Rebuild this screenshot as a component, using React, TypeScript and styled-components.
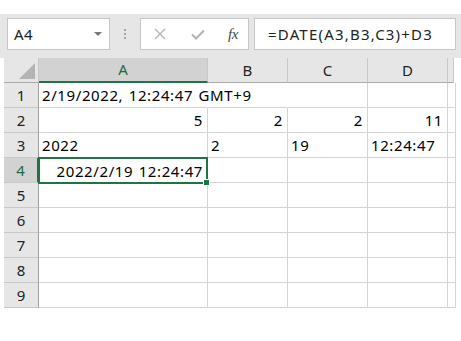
import React from "react";
import styled, { createGlobalStyle } from "styled-components";

const Global = createGlobalStyle`
  html, body { margin: 0; padding: 0; background: #fff; }
  body { font-family: "Segoe UI", "Noto Sans", "Open Sans", sans-serif; }
`;

const Page = styled.div`
  width: 461px;
  height: 341px;
  padding-top: 14px;
  box-sizing: border-box;
  background: #fff;
  overflow: hidden;
`;

const Toolbar = styled.div`
  height: 44px;
  background: #e6e6e6;
  display: flex;
  align-items: flex-start;
  padding: 4px 0 0 7px;
  box-sizing: border-box;
`;

const NameBox = styled.div`
  width: 103px;
  height: 32px;
  background: #fff;
  border: 1px solid #c6c6c6;
  box-sizing: border-box;
  display: flex;
  align-items: center;
  justify-content: space-between;
  padding: 0 7px 0 6px;
  font-size: 15px;
  letter-spacing: 0.5px;
  color: #222;
`;

const Caret = styled.span`
  width: 0;
  height: 0;
  border-left: 4px solid transparent;
  border-right: 4px solid transparent;
  border-top: 4px solid #777;
`;

const Dots = styled.div`
  width: 30px;
  height: 32px;
  display: flex;
  flex-direction: column;
  align-items: center;
  justify-content: center;
  gap: 2px;
  span {
    width: 2px;
    height: 2px;
    background: #a6a6a6;
  }
`;

const FxBox = styled.div`
  width: 109px;
  height: 32px;
  background: #fff;
  border: 1px solid #c6c6c6;
  box-sizing: border-box;
  display: flex;
  align-items: center;
  padding-left: 13px;
`;

const FxButton = styled.div<{ $w: number }>`
  width: ${(p) => p.$w}px;
  display: flex;
  align-items: center;
  justify-content: flex-start;
  height: 100%;
`;

const FxLabel = styled.span`
  font-family: "Liberation Serif", "DejaVu Serif", serif;
  font-style: italic;
  font-size: 15px;
  color: #444;
  letter-spacing: -0.5px;
`;

const FormulaBox = styled.div`
  margin-left: 5px;
  width: 202px;
  height: 32px;
  background: #fff;
  border: 1px solid #c6c6c6;
  box-sizing: border-box;
  display: flex;
  align-items: center;
  padding-left: 13px;
  font-size: 15px;
  letter-spacing: 1.2px;
  color: #222;
  white-space: nowrap;
`;

const Grid = styled.div`
  margin-left: 4px;
  width: 450px;
  display: grid;
  grid-template-columns: 35px 169px 80px 80px 80px 6px;
  font-size: 15px;
`;

const Corner = styled.div`
  height: 25px;
  background: #e6e6e6;
  border-right: 1px solid #c8c8c8;
  border-bottom: 1px solid #ababab;
  box-sizing: border-box;
  position: relative;
  &::after {
    content: "";
    position: absolute;
    right: 3px;
    bottom: 3px;
    width: 0;
    height: 0;
    border-left: 16px solid transparent;
    border-bottom: 16px solid #b4b4b4;
  }
`;

const ColHead = styled.div<{ $sel?: boolean }>`
  height: 25px;
  background: ${(p) => (p.$sel ? "#d2d2d2" : "#e6e6e6")};
  border-right: 1px solid #c8c8c8;
  border-bottom: ${(p) => (p.$sel ? "2px solid #217346" : "1px solid #ababab")};
  box-sizing: border-box;
  display: flex;
  align-items: center;
  justify-content: center;
  color: ${(p) => (p.$sel ? "#1e6b41" : "#222")};
  padding-bottom: 1px;
`;

const RowHead = styled.div<{ $sel?: boolean }>`
  height: 25px;
  background: ${(p) => (p.$sel ? "#d2d2d2" : "#e6e6e6")};
  border-right: ${(p) => (p.$sel ? "2px solid #217346" : "1px solid #9e9e9e")};
  border-bottom: 1px solid #c8c8c8;
  box-sizing: border-box;
  display: flex;
  align-items: center;
  justify-content: center;
  color: ${(p) => (p.$sel ? "#1e6b41" : "#222")};
`;

const Cell = styled.div<{ $align?: "left" | "right"; $overflow?: boolean }>`
  height: 25px;
  border-right: ${(p) => (p.$overflow ? "1px solid transparent" : "1px solid #d4d4d4")};
  border-bottom: 1px solid #d4d4d4;
  box-sizing: border-box;
  display: flex;
  align-items: center;
  justify-content: ${(p) => (p.$align === "right" ? "flex-end" : "flex-start")};
  padding: 0 4px 0 3px;
  color: #000;
  white-space: nowrap;
  letter-spacing: 0.6px;
  word-spacing: 1px;
  overflow: visible;
  position: relative;
  z-index: ${(p) => (p.$overflow ? 1 : 0)};
`;

const ActiveWrap = styled.div`
  height: 25px;
  border-bottom: 1px solid #d4d4d4;
  box-sizing: border-box;
`;

const Active = styled.div`
  border: 2px solid #217346;
  margin: -1px 0 0 -1px;
  width: calc(100% + 1px);
  height: 27px;
  box-sizing: border-box;
  display: flex;
  align-items: center;
  justify-content: flex-end;
  padding: 0 3px;
  color: #000;
  white-space: nowrap;
  letter-spacing: 0.6px;
  word-spacing: 1px;
  position: relative;
  z-index: 2;
  background: #fff;
  &::after {
    content: "";
    position: absolute;
    right: -4px;
    bottom: -4px;
    width: 5px;
    height: 5px;
    background: #217346;
    border: 1px solid #fff;
  }
`;

type CellData = { t?: string; a?: "left" | "right"; o?: boolean };

const rows: CellData[][] = [
  [{ t: "2/19/2022, 12:24:47 GMT+9", o: true }, { o: true }, {}, {}],
  [{ t: "5", a: "right" }, { t: "2", a: "right" }, { t: "2", a: "right" }, { t: "11", a: "right" }],
  [{ t: "2022" }, { t: "2" }, { t: "19" }, { t: "12:24:47" }],
  [{ t: "ACTIVE" }, {}, {}, {}],
  [{}, {}, {}, {}],
  [{}, {}, {}, {}],
  [{}, {}, {}, {}],
  [{}, {}, {}, {}],
  [{}, {}, {}, {}],
];

const XIcon = () => (
  <svg width="12" height="12" viewBox="0 0 12 12">
    <path d="M1 1 L11 11 M11 1 L1 11" stroke="#b3b3b3" strokeWidth="1.4" fill="none" />
  </svg>
);

const CheckIcon = () => (
  <svg width="14" height="11" viewBox="0 0 14 11">
    <path d="M1 5.5 L5 9.5 L13 1.5" stroke="#b3b3b3" strokeWidth="2" fill="none" />
  </svg>
);

export default function App() {
  return (
    <Page>
      <Global />
      <Toolbar>
        <NameBox>
          <span>A4</span>
          <Caret />
        </NameBox>
        <Dots>
          <span />
          <span />
          <span />
        </Dots>
        <FxBox>
          <FxButton $w={37}>
            <XIcon />
          </FxButton>
          <FxButton $w={37}>
            <CheckIcon />
          </FxButton>
          <FxButton $w={20}>
            <FxLabel>fx</FxLabel>
          </FxButton>
        </FxBox>
        <FormulaBox>=DATE(A3,B3,C3)+D3</FormulaBox>
      </Toolbar>
      <Grid>
        <Corner />
        <ColHead $sel>A</ColHead>
        <ColHead>B</ColHead>
        <ColHead>C</ColHead>
        <ColHead>D</ColHead>
        <ColHead />
        {rows.map((r, i) => (
          <React.Fragment key={i}>
            <RowHead $sel={i === 3}>{i + 1}</RowHead>
            {r.map((c, j) =>
              c.t === "ACTIVE" ? (
                <ActiveWrap key={j}>
                  <Active>2022/2/19 12:24:47</Active>
                </ActiveWrap>
              ) : (
                <Cell key={j} $align={c.a} $overflow={c.o}>
                  {c.t}
                </Cell>
              )
            )}
            <Cell />
          </React.Fragment>
        ))}
      </Grid>
    </Page>
  );
}
